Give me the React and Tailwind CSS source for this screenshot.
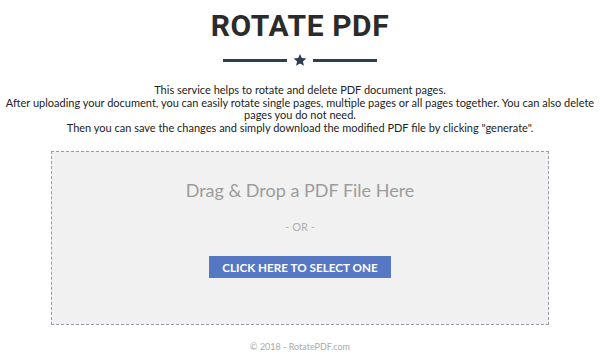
export default function App() {
  return (
    <div className="w-[600px] h-[360px] bg-white flex flex-col items-center overflow-hidden" style={{ fontFamily: 'Lato, "Open Sans", sans-serif' }}>
      <h1 className="mt-[9px] text-[30px] leading-[34px] font-bold tracking-[0.6px] text-[#2b2b2b]" style={{ fontFamily: 'Roboto, "Liberation Sans", sans-serif' }}>ROTATE PDF</h1>
      <div className="mt-[10px] flex items-center gap-[5px]">
        <div className="w-[64px] h-[3px] bg-[#2c3e50]" />
        <svg width="14" height="14" viewBox="0 0 24 24" className="mx-[1px]">
          <path d="M12 1.5l3.1 7.2 7.8.6-5.9 5.1 1.8 7.6L12 17.9 5.2 22l1.8-7.6L1.1 9.3l7.8-.6z" fill="#2c3e50" />
        </svg>
        <div className="w-[64px] h-[3px] bg-[#2c3e50]" />
      </div>
      <div className="mt-[17px] w-[600px] text-center text-[11px] leading-[12.5px] text-[#222]">
        <p>This service helps to rotate and delete PDF document pages.</p>
        <p>After uploading your document, you can easily rotate single pages, multiple pages or all pages together. You can also delete pages you do not need.</p>
        <p>Then you can save the changes and simply download the modified PDF file by clicking "generate".</p>
      </div>
      <div className="mt-[17px] w-[498px] h-[174px] border border-dashed border-[#9a9aaa] bg-[#f1f1f1] flex flex-col items-center">
        <div className="mt-[26px] text-[18px] leading-[24px] text-[#9c9c9c]">Drag &amp; Drop a PDF File Here</div>
        <div className="mt-[18px] text-[11px] leading-[14px] text-[#b0b0b0]">- OR -</div>
        <button className="mt-[22px] w-[182px] h-[22px] bg-[#5677c4] text-white text-[11.7px] font-bold leading-[22px]">CLICK HERE TO SELECT ONE</button>
      </div>
      <div className="mt-[16px] text-[9px] leading-[12px] text-[#aaa]">© 2018 - RotatePDF.com</div>
    </div>
  );
}
